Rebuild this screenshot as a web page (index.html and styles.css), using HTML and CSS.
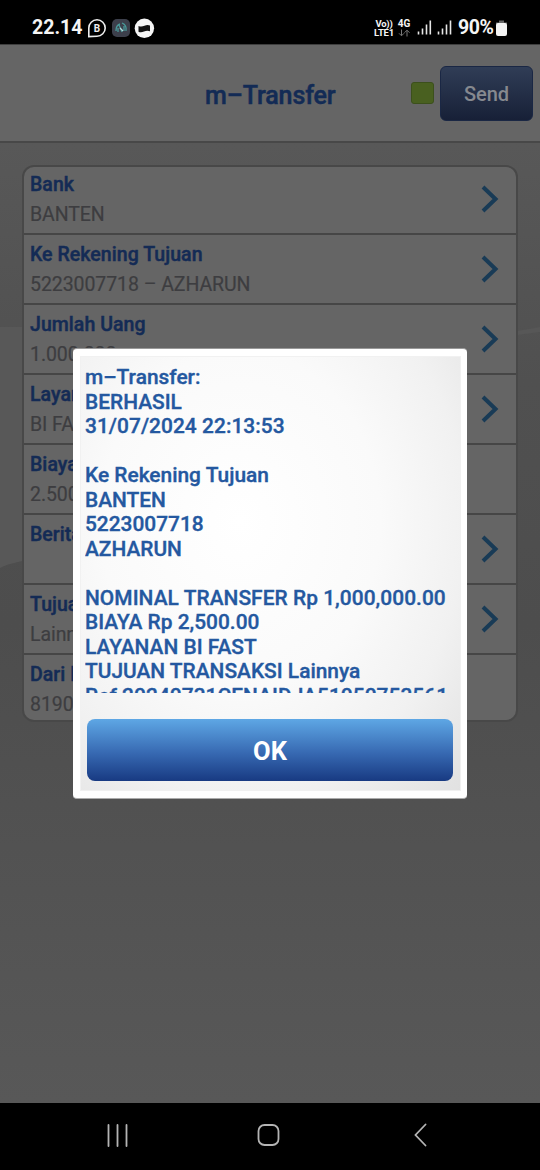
FILE: index.html
```html
<!DOCTYPE html>
<html lang="id">
<head>
<meta charset="utf-8">
<title>m-Transfer</title>
<link rel="stylesheet" href="styles.css">
</head>
<body>
<div class="phone">
  <div class="status">
    <span class="clock">22.14</span>
    <svg class="notifs" width="68" height="22" viewBox="0 0 68 22">
      <path d="M1.800 19.600V11A8.200 8.200 0 1 1 10 19.200Z" fill="none" stroke="#eee" stroke-width="1.600"/>
      <text x="10" y="14.800" class="biz">B</text>
      <rect x="25" y="2" width="18" height="18" rx="5" fill="#3c3f4b"/>
      <path d="M29 14q0-6 4-7M32 8l3 7M35 6q5 2 4 8M31 11v4M37 9v5" fill="none" stroke="#4a9a9b" stroke-width="1.300"/>
      <path d="M33 11l3 3" stroke="#b5d9dc" stroke-width="1.200"/>
      <circle cx="57.400" cy="11.300" r="9.700" fill="#f5f5f5"/>
      <path d="M51.500 9q3 1.200 6-.3t5.500-.2v5.800q-3-1-6 .3t-5.500.2Z" fill="#111"/>
    </svg>
    <div class="net volte"><span>Vo))</span><span>LTE1</span></div>
    <div class="net lte"><span>4G</span>
      <svg width="12" height="8" viewBox="0 0 12 8"><path d="M3.500.5v6M1 4.300l2.500 2.500L6 4.300M9 7.500v-6M6.500 3.700L9 1.200l2.500 2.500" fill="none" stroke="#777"/></svg>
    </div>
    <svg class="bars" width="36" height="16" viewBox="0 0 36 16"><path d="M1.500 11.500v3M5.500 8.500v6M9.500 4.500v10M13.300.5v14M21.500 11.500v3M25.500 8.500v6M29.500 4.500v10M33.500.5v14" stroke="#e6e6e6" stroke-width="1.600"/></svg>
    <span class="pct">90%</span>
    <svg class="batt" width="11" height="16" viewBox="0 0 11 16"><path d="M3 .5h5v2h3v2H0v-2h3Z" fill="#666"/><rect y="3" width="11" height="13" rx="2" fill="#f3f3f3"/></svg>
  </div>
  <header class="header">
    <h1 class="title">m–Transfer</h1>
    <span class="led"></span>
    <button class="send">Send</button>
  </header>
  <main class="main">
    <svg class="wave" width="540" height="600" viewBox="0 0 540 600"><path d="M0 184H60V412Q12 418 0 425Z" fill="#585858"/><path d="M517 188L540 184V189L517 192Z" fill="#575757"/></svg>
    <div class="card">
      <div class="row"><div><b>Bank</b><p>BANTEN</p></div><svg class="chev" viewBox="0 0 18 28"><path d="M2 2L14.500 14L2 26"/></svg></div>
      <div class="row"><div><b>Ke Rekening Tujuan</b><p>5223007718 – AZHARUN</p></div><svg class="chev" viewBox="0 0 18 28"><path d="M2 2L14.500 14L2 26"/></svg></div>
      <div class="row"><div><b>Jumlah Uang</b><p>1.000.000</p></div><svg class="chev" viewBox="0 0 18 28"><path d="M2 2L14.500 14L2 26"/></svg></div>
      <div class="row"><div><b>Layanan</b><p>BI FAST</p></div><svg class="chev" viewBox="0 0 18 28"><path d="M2 2L14.500 14L2 26"/></svg></div>
      <div class="row"><div><b>Biaya</b><p>2.500</p></div></div>
      <div class="row"><div><b>Berita</b><p></p></div><svg class="chev" viewBox="0 0 18 28"><path d="M2 2L14.500 14L2 26"/></svg></div>
      <div class="row"><div><b>Tujuan</b><p>Lainnya</p></div><svg class="chev" viewBox="0 0 18 28"><path d="M2 2L14.500 14L2 26"/></svg></div>
      <div class="row"><div><b>Dari Rek</b><p>8190</p></div></div>
    </div>
  </main>
  <nav class="nav">
    <svg width="540" height="68" viewBox="0 0 540 68"><g fill="none" stroke="#b4b4b4" stroke-width="1.800" stroke-linecap="round"><path d="M108.500 22v21M117.500 22v21M126.500 22v21M425.500 21.500L415.500 32L425.500 42.500"/><rect x="258.500" y="22" width="20" height="20" rx="6"/></g></svg>
  </nav>
  <section class="dialog">
    <div class="panel">
      <div class="message">
        <div>m–Transfer:</div><div>BERHASIL</div><div class="num">31/07/2024 22:13:53</div><div>&nbsp;</div>
        <div>Ke Rekening Tujuan</div><div>BANTEN</div><div>5223007718</div><div>AZHARUN</div><div>&nbsp;</div>
        <div class="num">NOMINAL TRANSFER Rp 1,000,000.00</div><div>BIAYA Rp 2,500.00</div><div>LAYANAN BI FAST</div><div>TUJUAN TRANSAKSI Lainnya</div><div class="num">Ref 20240731CENAIDJA51050753561</div>
      </div>
      <button class="ok">OK</button>
    </div>
  </section>
</div>
</body>
</html>
```
FILE: styles.css
```css
* { box-sizing: border-box; }
body, h1, p { margin: 0; }
body { font-family: Roboto, sans-serif; background: #000; }
button { font-family: inherit; padding: 0; }
.phone { position: relative; width: 540px; height: 1170px; overflow: hidden; display: flex; flex-direction: column; }
.status { height: 44px; background: #000; color: #f5f5f5; display: flex; align-items: flex-start; padding: 17px 0 0 32px; }
.clock, .pct { font-size: 19.5px; line-height: 22px; font-weight: 700; }
.clock { width: 55px; }
.notifs { margin: 0 219px 0 0; }
.biz { font: 700 10px Roboto, sans-serif; fill: #eee; text-anchor: middle; }
.net { font-size: 9.5px; line-height: 9px; font-weight: 700; display: flex; flex-direction: column; align-items: center; margin-top: 2px; }
.volte { width: 20px; letter-spacing: -.2px; }
.lte { width: 14px; margin-left: 3px; font-size: 10px; }
.lte svg { margin-top: 1px; }
.bars { margin: 3px 0 0 6px; }
.pct { margin-left: 5px; width: 36px; letter-spacing: -.4px; }
.batt { margin: 3px 0 0 2px; }
.header { height: 99px; background: #656565; border-top: 1px solid #3e3e3e; border-bottom: 2px solid #484848; display: grid; grid-template-columns: 411px 29px 93px; align-items: center; }
.title { padding: 4px 0 0 205px; font-size: 25px; font-weight: 500; color: #132b55; -webkit-text-stroke: .5px #132b55; letter-spacing: -.1px; }
.led { width: 23px; height: 22px; border-radius: 3px; background: #496020; border: 1px solid #3c501c; }
.send { height: 55px; margin-top: 1px; border: 1px solid #1a2744; border-radius: 6px; background: linear-gradient(#303d56, #172037); color: #86898f; font-size: 20px; font-weight: 500; }
.main { position: relative; height: 960px; background: linear-gradient(#585858, #505050 25%, #4d4d4d 50%, #4f4f4f 60%, #585858); padding: 22px 22px 0; }
.wave { position: absolute; left: 0; top: 0; }
.card { position: relative; height: 557px; border: 2px solid #484848; border-radius: 12px; background: #656565; overflow: hidden; }
.row { height: 70px; border-bottom: 2px solid #464646; padding: 8px 17px 0 6px; display: flex; justify-content: space-between; }
.row:first-child { height: 68px; padding-top: 6px; }
.row:last-child { border: 0; }
.row b { display: block; font-size: 19.5px; line-height: 23px; font-weight: 500; color: #142b55; -webkit-text-stroke: .45px #142b55; white-space: nowrap; letter-spacing: .05px; }
.row p { font-size: 19.5px; line-height: 23px; margin-top: 7px; color: #3d3d40; -webkit-text-stroke: .2px #3d3d40; white-space: nowrap; letter-spacing: -.07px; }
.chev { width: 18px; height: 28px; margin-top: 12px; }
.chev path { fill: none; stroke: #193b56; stroke-width: 4; }
.nav { height: 67px; background: #000; }
.nav svg { display: block; }
.dialog { position: absolute; left: 73px; top: 348px; width: 394px; height: 451px; background: #fff; border-radius: 4px; padding: 7px 6px 7px 7px; border-top: 1px solid #999; border-bottom: 1px solid #aaa; }
.panel { height: 435px; padding: 8px 7px 0 4px; border: 1px solid #f1f1f1; background: radial-gradient(ellipse at 42% 38%, #fff 0%, #fafafa 45%, #f1f1f1 72%, #e1e1e1 100%); }
.message { height: 328px; overflow: hidden; color: #2458a0; font-size: 20.9px; line-height: 24.5px; font-weight: 500; -webkit-text-stroke: .35px #2458a0; white-space: nowrap; }
.num { letter-spacing: .05px; }
.ok { display: block; width: 366px; height: 62px; margin: 26px 0 0 2px; border: 0; border-radius: 8px; background: linear-gradient(#5ea7e5, #3769b2 55%, #183a82); color: #fff; font-size: 25.5px; font-weight: 700; padding-top: 2px; }
```
